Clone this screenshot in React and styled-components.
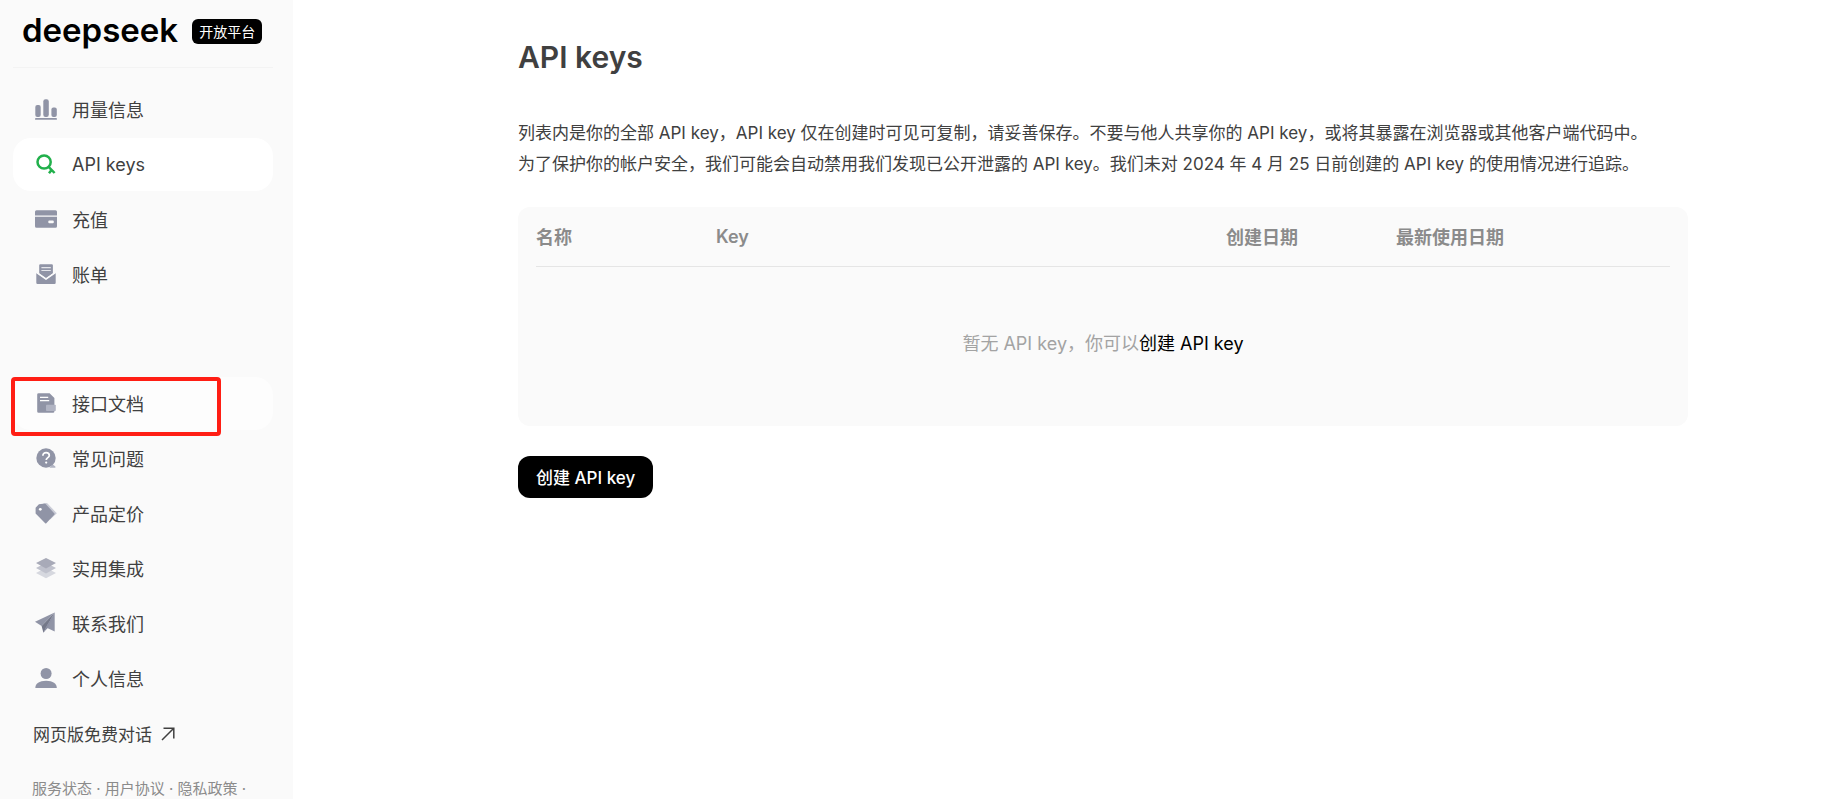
import styled, { createGlobalStyle } from "styled-components";

const GlobalStyle = createGlobalStyle`
  * {
    box-sizing: border-box;
  }

  body {
    margin: 0;
    background-color: white;
    color: #404040;
    font-family: Inter, "Noto Sans CJK SC", sans-serif;
    font-size: 18px;
  }
`;

const Layout = styled.div`
  display: flex;
  height: 100vh;
  overflow: hidden;
`;

const Sidebar = styled.aside`
  background-color: #fafafa;
  display: flex;
  flex-direction: column;
  flex-shrink: 0;
  overflow: hidden;
  padding: 0 20px 0 13px;
  width: 293px;
`;

const Brand = styled.header`
  align-items: center;
  border-bottom: 1px solid #f3f3f3;
  display: flex;
  flex-shrink: 0;
  gap: 14px;
  height: 68px;
  padding: 0 0 4px 9px;
`;

const Wordmark = styled.span`
  color: black;
  font-size: 33px;
  font-weight: 600;
  line-height: 40px;
  padding: 0 0 4px 0;
`;

const Badge = styled.span`
  background-color: black;
  border-radius: 6px;
  color: white;
  font-size: 14px;
  font-weight: 400;
  line-height: 25px;
  padding: 0 7px;
  white-space: nowrap;
`;

const Nav = styled.nav`
  display: flex;
  flex-direction: column;
  flex-shrink: 0;
  gap: 2px;
  padding: ${(p) => (p.$secondary ? "76px" : "15px")} 0 0 0;
`;

const Item = styled.a`
  align-items: center;
  background-color: ${(p) => p.$background || "transparent"};
  border-radius: 18px;
  color: #404040;
  display: flex;
  gap: 15px;
  height: 53px;
  padding: 0 22px 1px;
  position: relative;
  text-decoration: none;
`;

const Highlight = styled.span`
  border: 4px solid #ff1e14;
  border-radius: 4px;
  height: 59px;
  left: -2px;
  pointer-events: none;
  position: absolute;
  top: 0;
  width: 210px;
`;

const ChatLink = styled.a`
  align-items: center;
  color: #404040;
  display: flex;
  flex-shrink: 0;
  font-size: 17px;
  gap: 9px;
  height: 57px;
  padding: 0 20px;
  text-decoration: none;
`;

const Legal = styled.footer`
  color: #8b8b8b;
  flex-shrink: 0;
  font-size: 15px;
  line-height: 22px;
  padding: 16px 19px 0;
`;

const LegalLink = styled.a`
  color: inherit;
  text-decoration: none;
`;

const Main = styled.main`
  flex: 1;
  min-width: 0;
  padding: 37px 133px 0 225px;
`;

const Title = styled.h1`
  font-size: 30px;
  font-weight: 600;
  line-height: 40px;
  margin: 0 0 41px 0;
`;

const Description = styled.p`
  font-size: 17px;
  line-height: 31px;
  margin: 0;
`;

const Panel = styled.section`
  background-color: #fafafa;
  border-radius: 12px;
  margin: 27px 0 30px 0;
  padding: 0 18px;
`;

const Table = styled.table`
  border-collapse: collapse;
  table-layout: fixed;
  width: 100%;
`;

const HeadCell = styled.th`
  border-bottom: 1px solid #e5e5e5;
  color: #8b8b8b;
  font-weight: 600;
  height: 59px;
  padding: 0;
  text-align: left;
  width: ${(p) => p.$width || "auto"};
`;

const EmptyCell = styled.td`
  color: #a3a3a3;
  height: 160px;
  padding: 0 0 8px 0;
  text-align: center;
`;

const InlineButton = styled.button`
  background: none;
  border: none;
  color: black;
  cursor: pointer;
  font: inherit;
  padding: 0;
`;

const PrimaryButton = styled.button`
  background-color: black;
  border: none;
  border-radius: 12px;
  color: white;
  cursor: pointer;
  font-family: inherit;
  font-size: 17px;
  font-weight: 500;
  height: 42px;
  padding: 0 18px 2px;
`;

const Svg = styled.svg`
  display: block;
  fill: #9094a6;
  flex-shrink: 0;
  height: 22px;
  width: 22px;
`;

const UsageIcon = () => (
  <Svg viewBox="0 0 22 22">
    <rect x="0.3" y="7" width="5.4" height="12" rx="2" />
    <rect x="8.3" y="1.2" width="5.5" height="17.8" rx="2.2" />
    <rect x="16.4" y="9.4" width="5.4" height="9.6" rx="2" />
    <rect x="0" y="20" width="22" height="1.8" rx="0.9" />
  </Svg>
);

const KeyIcon = () => (
  <Svg viewBox="0 0 22 22">
    <g fill="none" stroke="#21b04b" strokeWidth="2.5">
      <circle cx="9.1" cy="9" r="6.6" />
      <path d="M13.6 13.8l6 6.2M16.9 16.6l-2.9 3.7" />
    </g>
  </Svg>
);

const CardIcon = () => (
  <Svg viewBox="0 0 22 22">
    <path d="M1.5 2.2h19A1.5 1.5 0 0 1 22 3.7v3.7H0V3.7a1.5 1.5 0 0 1 1.5-1.5z" />
    <path
      fillRule="evenodd"
      d="M0 8.8h22v9.5a1.5 1.5 0 0 1-1.5 1.5h-19A1.5 1.5 0 0 1 0 18.3zM14.3 12.4a1 1 0 0 0-1 1v.8a1 1 0 0 0 1 1h3.5a1 1 0 0 0 1-1v-.8a1 1 0 0 0-1-1z"
    />
  </Svg>
);

const BillIcon = () => (
  <Svg viewBox="0 0 22 22">
    <path d="M5.3 1.2h11.5a1.1 1.1 0 0 1 1.1 1.1v8L11 15 4.2 10.3v-8a1.1 1.1 0 0 1 1.1-1.1z" />
    <path d="M1.3 9.7L11 16.6l9.7-6.9v10a1.2 1.2 0 0 1-1.2 1.2h-17a1.2 1.2 0 0 1-1.2-1.2z" />
    <path
      d="M1.3 9.4L11 16.200l9.700-6.800"
      fill="none"
      stroke="#fafafa"
      strokeWidth="1.300"
    />
    <path d="M6.4 4.6h9.4M6.4 7.5h9.4" stroke="#e4e5ea" strokeWidth="1.2" />
  </Svg>
);

const DocIcon = () => (
  <Svg viewBox="0 0 22 22">
    <path d="M3.6 1.2h11l4.8 4.9v13.3a1.4 1.4 0 0 1-1.4 1.4H3.6a1.4 1.4 0 0 1-1.4-1.4V2.6a1.4 1.4 0 0 1 1.4-1.4z" />
    <path d="M5 5.4h8.2M5 8.7h9.2" stroke="#fdfdfd" strokeWidth="1.2" />
    <rect x="11" y="12.8" width="9.8" height="6.2" rx="0.8" fill="#b1b4c3" />
  </Svg>
);

const HelpIcon = () => (
  <Svg viewBox="0 0 22 22">
    <path d="M17.5 17.3l2.9 2.2v1.2h-6z" fill="#b1b4c3" />
    <circle cx="11" cy="11" r="9.7" />
    <path
      d="M7.9 8.7c0-1.9 1.4-3 3.2-3s3.2 1.1 3.2 2.8c0 2.2-3.1 2.2-3.1 4.6"
      fill="none"
      stroke="white"
      strokeWidth="1.7"
    />
    <circle cx="11.2" cy="15.6" r="1.1" fill="white" />
  </Svg>
);

const TagIcon = () => (
  <Svg viewBox="0 0 22 22">
    <path d="M8 1.7l4-.6 9.8 10.1-6.6 6.2z" fill="#c9cbd6" />
    <path d="M3.9 2.3l6.3-.8 9.2 10a.8.8 0 0 1 0 1.1l-8.1 8.6a.8.8 0 0 1-1.1 0L.6 11.4V5.8z" />
    <circle cx="5.3" cy="7.3" r="1.4" fill="white" />
  </Svg>
);

const LayersIcon = () => (
  <Svg viewBox="0 0 22 22">
    <path d="M11 10.8l10 5.1-10 5.4-10-5.4z" fill="#d6d8df" />
    <path d="M11 5.8l10 5.2-10 5.4L1 11z" fill="#c0c2cd" />
    <path d="M11 .9l10 5.2-10 5.4L1 6.1z" fill="#a8aab8" />
  </Svg>
);

const PlaneIcon = () => (
  <Svg viewBox="0 0 22 22">
    <path d="M19.7.5L0 9.8l6.6 4.1z" />
    <path d="M19.7.5L6.6 13.9l1.8 6.9z" fill="#747889" />
    <path d="M19.7.5l-8.5 15 8.5 4.1z" />
    <path d="M19.7.5l-8.9 14.8-2.4 5.5 4-4.6z" fill="#8b8fa2" />
  </Svg>
);

const UserIcon = () => (
  <Svg viewBox="0 0 22 22">
    <circle cx="11.1" cy="6.5" r="5.5" />
    <path d="M.3 21c0-4.3 3.9-7.3 10.8-7.3s10.700 3 10.700 7.300z" />
  </Svg>
);

const ArrowIcon = () => (
  <svg width="14" height="14" viewBox="0 0 14 14" fill="none">
    <path
      d="M1 13L12.500 1.500M2.500 1.200h10.300v10.300"
      stroke="#404040"
      strokeWidth="1.500"
    />
  </svg>
);

const primaryItems = [
  { label: "用量信息", Icon: UsageIcon },
  { label: "API keys", Icon: KeyIcon, background: "white" },
  { label: "充值", Icon: CardIcon },
  { label: "账单", Icon: BillIcon },
];

const secondaryItems = [
  { label: "接口文档", Icon: DocIcon, background: "#fdfdfd", highlighted: true },
  { label: "常见问题", Icon: HelpIcon },
  { label: "产品定价", Icon: TagIcon },
  { label: "实用集成", Icon: LayersIcon },
  { label: "联系我们", Icon: PlaneIcon },
  { label: "个人信息", Icon: UserIcon },
];

const columns = [
  { label: "名称", width: "180px" },
  { label: "Key" },
  { label: "创建日期", width: "170px" },
  { label: "最新使用日期", width: "274px" },
];

const NavList = ({ items, secondary }) => (
  <Nav $secondary={secondary}>
    {items.map(({ label, Icon, background, highlighted }) => (
      <Item key={label} href="#" $background={background}>
        <Icon />
        {label}
        {highlighted && <Highlight />}
      </Item>
    ))}
  </Nav>
);

export default function App() {
  return (
    <>
      <GlobalStyle />
      <Layout>
        <Sidebar>
          <Brand>
            <Wordmark>deepseek</Wordmark>
            <Badge>开放平台</Badge>
          </Brand>

          <NavList items={primaryItems} />
          <NavList items={secondaryItems} secondary />

          <ChatLink href="#">
            网页版免费对话
            <ArrowIcon />
          </ChatLink>

          <Legal>
            <LegalLink href="#">服务状态</LegalLink> ·{" "}
            <LegalLink href="#">用户协议</LegalLink> ·{" "}
            <LegalLink href="#">隐私政策</LegalLink> ·
          </Legal>
        </Sidebar>

        <Main>
          <Title>API keys</Title>
          <Description>
            列表内是你的全部 API key，API key
            仅在创建时可见可复制，请妥善保存。不要与他人共享你的 API
            key，或将其暴露在浏览器或其他客户端代码中。
          </Description>
          <Description>
            为了保护你的帐户安全，我们可能会自动禁用我们发现已公开泄露的 API
            key。我们未对 2024 年 4 月 25 日前创建的 API key
            的使用情况进行追踪。
          </Description>

          <Panel>
            <Table>
              <thead>
                <tr>
                  {columns.map(({ label, width }) => (
                    <HeadCell key={label} scope="col" $width={width}>
                      {label}
                    </HeadCell>
                  ))}
                </tr>
              </thead>
              <tbody>
                <tr>
                  <EmptyCell colSpan={columns.length}>
                    暂无 API key，你可以
                    <InlineButton type="button">创建 API key</InlineButton>
                  </EmptyCell>
                </tr>
              </tbody>
            </Table>
          </Panel>

          <PrimaryButton type="button">创建 API key</PrimaryButton>
        </Main>
      </Layout>
    </>
  );
}
